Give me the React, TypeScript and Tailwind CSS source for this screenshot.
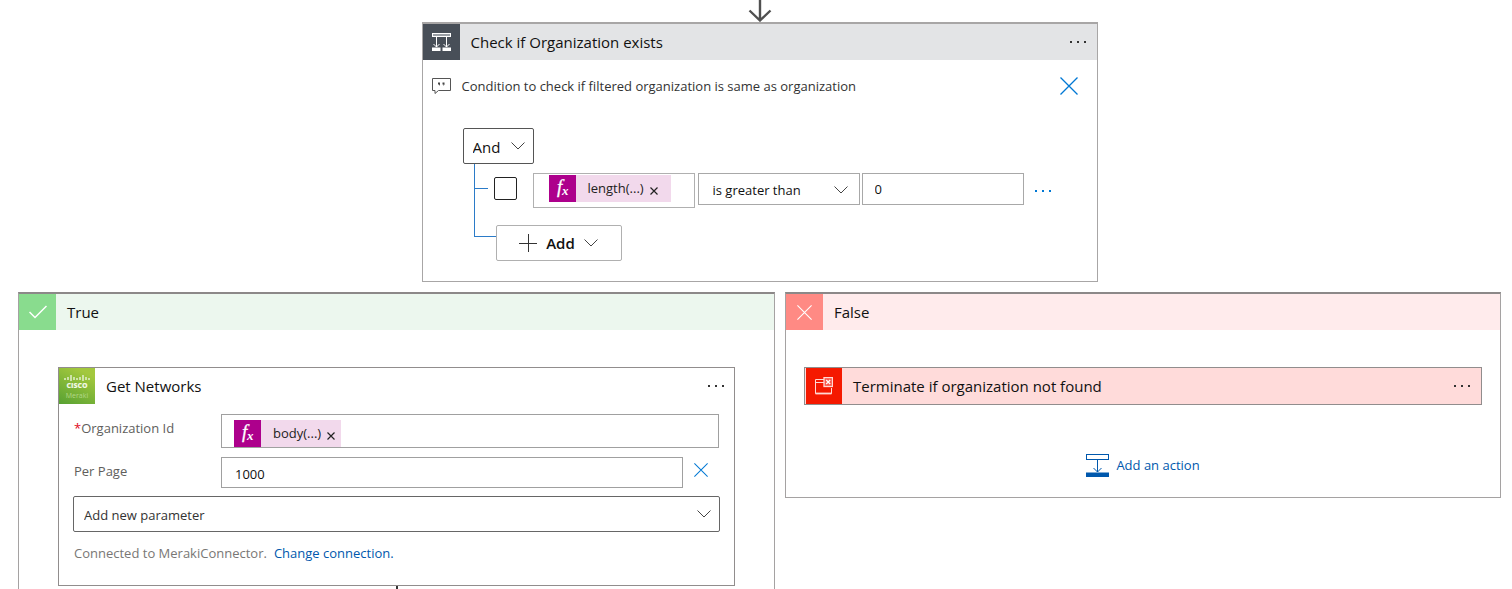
import type { ReactNode } from "react";

function Ellipsis({ label, tone = "text-[#333]" }: { label: string; tone?: string }) {
  return (
    <button type="button" aria-label={label} className={`shrink-0 ${tone}`}>
      <svg width="18" height="4" viewBox="0 0 18 4" fill="currentColor">
        <rect x="1" y="1" width="2" height="2" />
        <rect x="8" y="1" width="2" height="2" />
        <rect x="15" y="1" width="2" height="2" />
      </svg>
    </button>
  );
}

function Cross({ className }: { className: string }) {
  return (
    <svg viewBox="0 0 18 18" className={className} fill="none" stroke="currentColor" strokeWidth="1.3">
      <path d="M.5.5l17 17M17.5.5l-17 17" />
    </svg>
  );
}

function Chevron() {
  return (
    <svg width="14" height="8" viewBox="0 0 14 8" fill="none" stroke="#444" className="shrink-0">
      <path d="M.5.5L7 7 13.5.5" />
    </svg>
  );
}

function ConditionIcon() {
  return (
    <svg width="20" height="20" viewBox="0 0 20 20" fill="none" stroke="#fff">
      <rect x="1.5" y="1.5" width="18" height="3" fill="#9a9fa5" />
      <path d="M5.5 5v10M15.5 5v10M2.5 12l3 3 3-3M12.5 12l3 3 3-3" />
      <path d="M1 15.5h8.500v3.500H1zM11.500 15.500H20V19h-8.500z" fill="#fff" stroke="none" />
    </svg>
  );
}

function Token({ text, className }: { text: string; className: string }) {
  return (
    <span className={`flex h-[27px] shrink-0 items-center bg-[#f2d9ec] text-[13px] text-[#222] ${className}`}>
      <svg width="27" height="27" viewBox="0 0 27 27" className="mr-3">
        <rect width="27" height="27" fill="#ad008c" />
        <text x="8" y="18" fill="#fff" stroke="#fff" strokeWidth=".3" fontFamily="Liberation Serif, serif" fontStyle="italic" fontSize="19">f</text>
        <text x="13" y="20" fill="#fff" fontFamily="Liberation Serif, serif" fontStyle="italic" fontWeight="700" fontSize="13">x</text>
      </svg>
      <span className="pt-px">{text}</span>
      <button type="button" aria-label={`Remove ${text}`} className="mt-1 ml-[6px]">
        <svg width="8" height="8" viewBox="0 0 8 8" stroke="#222" strokeWidth="1.2">
          <path d="M.5.5l7 7M7.5.5l-7 7" />
        </svg>
      </button>
    </span>
  );
}

function Picker({ label, value, className, inset, arrow }: { label: string; value: string; className: string; inset: string; arrow: string }) {
  return (
    <div className={`grid items-center border bg-white ${className}`}>
      <select aria-label={label} className={`col-start-1 row-start-1 h-full w-full appearance-none bg-transparent pt-[3px] ${inset}`}>
        <option>{value}</option>
      </select>
      <span className={`pointer-events-none col-start-1 row-start-1 justify-self-end ${arrow}`}>
        <Chevron />
      </span>
    </div>
  );
}

function Branch({ title, tile, band, icon, children }: { title: string; tile: string; band: string; icon: ReactNode; children: ReactNode }) {
  return (
    <section className="border border-t-2 border-[#a5a2a2] border-t-[#8c8888]">
      <header className={`flex h-9 items-center ${band}`}>
        <span className={`flex h-9 w-[37px] items-center justify-center ${tile}`}>{icon}</span>
        <h2 className="pl-[11px] text-[15px]">{title}</h2>
      </header>
      {children}
    </section>
  );
}

function Condition() {
  return (
    <section className="mx-auto w-full max-w-[676px] border border-t-2 border-[#a8a6a6] pb-5">
      <header className="flex h-9 items-center bg-[#e3e4e6] pr-[10px]">
        <span className="flex h-full w-[37px] items-center justify-center bg-[#484f58]">
          <ConditionIcon />
        </span>
        <h2 className="flex-1 pt-px pl-[11px] text-[15px]">Check if Organization exists</h2>
        <Ellipsis label="Condition menu" />
      </header>
      <div className="flex h-[51px] items-center pr-[19px] pl-[9px]">
        <svg width="19" height="18" viewBox="0 0 19 18" fill="none" stroke="#555">
          <path d="M.5 1.5h18v12H6.5l-3.500 3v-3H.5z" />
          <path d="M6 5.5h2v2L7 9V7.5H6zM10.5 5.5h2v2l-1 1.500V7.5h-1z" fill="#444" stroke="none" />
        </svg>
        <p className="flex-1 pt-[2px] pl-[11px] text-[13px] text-[#333]">Condition to check if filtered organization is same as organization</p>
        <button type="button" aria-label="Remove comment" className="text-[#0078d4]">
          <Cross className="h-[18px] w-[18px]" />
        </button>
      </div>
      <div className="pt-[17px] pl-10">
        <Picker label="Group operator" value="And" className="h-9 w-[71px] rounded-[2px] border-[#555] text-[15px]" inset="pl-[9px]" arrow="pr-2" />
        <div className="flex pl-[11px]">
          <div className="w-5 shrink-0">
            <div className="h-[25px] w-[14px] border-b border-l border-[#2b7bc8]" />
            <div className="h-12 w-[22px] border-b border-l border-[#2b7bc8]" />
          </div>
          <div className="pt-[9px]">
            <div className="flex h-[52px] items-start">
              <input type="checkbox" aria-label="Select condition row" className="mt-1 mr-4 h-[23px] w-[23px] shrink-0 appearance-none rounded-[2px] border border-[#222]" />
              <div className="mr-[3px] flex h-[35px] w-[162px] items-start border border-[#b0b0b0] pt-px pl-[15px]">
                <Token text="length(...)" className="pr-[13px]" />
                <input aria-label="Left value" className="h-[27px] w-full min-w-0 outline-none" />
              </div>
              <Picker label="Comparison" value="is greater than" className="mr-[2px] h-8 w-[162px] border-[#a8a8a8] text-[13px]" inset="pl-[14px]" arrow="pt-[2px] pr-[11px]" />
              <input aria-label="Right value" defaultValue="0" className="h-8 w-[162px] border border-[#a8a8a8] pl-3 text-[13px]" />
              <span className="flex h-9 items-center pl-[10px]">
                <Ellipsis label="Row menu" tone="text-[#0078d4]" />
              </span>
            </div>
            <button type="button" className="ml-[2px] flex h-9 w-[126px] items-center justify-center rounded-[2px] border border-[#b0b0b0] text-[15px] font-semibold">
              <svg width="18" height="18" viewBox="0 0 18 18" stroke="#333" className="mr-[9px]">
                <path d="M0 9.5h18M9.5 0v18" />
              </svg>
              <span className="mr-[9px]">Add</span>
              <Chevron />
            </button>
          </div>
        </div>
      </div>
    </section>
  );
}

function MerakiLogo() {
  return (
    <svg width="36" height="36" viewBox="0 0 36 36" className="shrink-0">
      <defs>
        <linearGradient id="meraki" x1="0" y1="1" x2="0.5" y2="0">
          <stop offset="0" stopColor="#57a132" />
          <stop offset="1" stopColor="#a3c83d" />
        </linearGradient>
      </defs>
      <rect width="36" height="36" fill="url(#meraki)" />
      <path d="M6 10v2M9 9v3M12 7v6M15 9v3M18 10v2M21 9v3M24 7v6M27 9v3M30 10v2" stroke="#e4f0cc" strokeWidth="1.5" />
      <text x="18" y="20" textAnchor="middle" fill="#f2f8e4" fontFamily="Open Sans, sans-serif" fontWeight="800" fontSize="7">CISCO</text>
      <text x="18" y="30" textAnchor="middle" fill="#b4d787" fontFamily="Open Sans, sans-serif" fontSize="7">Meraki</text>
    </svg>
  );
}

function GetNetworks() {
  return (
    <section className="border border-[#918d8d] pb-[22px]">
      <header className="flex h-9 items-center pr-[9px]">
        <MerakiLogo />
        <h3 className="flex-1 pl-[11px] text-[15px]">Get Networks</h3>
        <Ellipsis label="Get Networks menu" />
      </header>
      <div className="px-[14px] text-[13px]">
        <div className="mt-[10px] flex">
          <label htmlFor="org" className="w-[148px] shrink-0 pt-[5px] pl-px text-[#605e5c]">
            <span className="text-[#e00b1c]">*</span>Organization Id
          </label>
          <div className="mr-px flex h-[34px] flex-1 items-end border border-[#a0a0a0] pl-3">
            <Token text="body(...)" className="pr-[6px]" />
            <input id="org" className="h-[27px] w-full min-w-0 outline-none" />
          </div>
        </div>
        <div className="mt-[9px] flex">
          <label htmlFor="per-page" className="w-[148px] shrink-0 pt-[5px] pl-px text-[#605e5c]">Per Page</label>
          <input id="per-page" defaultValue="1000" className="h-[31px] min-w-0 flex-1 border border-[#a0a0a0] pt-[2px] pl-[13px]" />
          <button type="button" aria-label="Remove Per Page" className="mr-3 ml-[11px] h-[26px] text-[#0078d4]">
            <Cross className="h-[14px] w-[14px]" />
          </button>
        </div>
        <Picker label="Add new parameter" value="Add new parameter" className="mt-2 h-9 rounded-[2px] border-[#666] text-[#333]" inset="pl-[10px]" arrow="pr-2" />
        <p className="mt-[11px] pl-px leading-5 text-[#797775]">
          Connected to MerakiConnector.
          <a href="#" className="pl-[7px] text-[#0058ad]">Change connection.</a>
        </p>
      </div>
    </section>
  );
}

export default function App() {
  return (
    <main className="pr-[11px] pl-[18px] font-['Open_Sans','Noto_Sans',sans-serif] text-[#111]">
      <svg width="24" height="22" viewBox="0 0 24 22" fill="none" stroke="#505050" strokeWidth="2.4" className="mx-auto block">
        <path d="M12 0v21M1.5 10.5L12 20.500l10.500-10" />
      </svg>
      <Condition />
      <div className="mt-[10px] grid grid-cols-[757fr_716fr] items-start gap-[10px]">
        <Branch
          title="True"
          tile="bg-[#89dc8e]"
          band="bg-[#ecf7ee]"
          icon={
            <svg width="18" height="14" viewBox="0 0 18 14" fill="none" stroke="#fff" strokeWidth="1.5">
              <path d="M.5 7L6 12.500 17.500 1" />
            </svg>
          }
        >
          <div className="px-[39px] pt-[37px]">
            <GetNetworks />
            <svg width="2" height="3" viewBox="0 0 2 3" className="mx-auto block">
              <path d="M1 0v3" stroke="#333" strokeWidth="2" />
            </svg>
          </div>
        </Branch>
        <Branch title="False" tile="bg-[#ff8a84] text-white" band="bg-[#ffebec]" icon={<Cross className="h-[15px] w-[15px]" />}>
          <div className="px-[18px] pt-[37px] pb-5">
            <section className="flex h-[38px] items-center border border-[#918d8d] bg-[#ffdbda] pr-[10px] pl-px">
              <span className="flex h-9 w-9 items-center justify-center bg-[#f51900]">
                <svg width="18" height="18" viewBox="0 0 18 18" fill="none" stroke="#ffd9d4">
                  <path d="M9 2.5H.5v14h16V11M.5 5.5H9" />
                  <path d="M.5 16.5h16" strokeWidth="1.8" />
                  <rect x="9" y=".5" width="8.500" height="9" fill="#f8574a" strokeWidth="1.3" />
                  <path d="M11.2 3l4 4M15.2 3l-4 4" stroke="#fff" strokeWidth="1.3" />
                </svg>
              </span>
              <h3 className="flex-1 pl-[11px] text-[15px]">Terminate if organization not found</h3>
              <Ellipsis label="Terminate menu" />
            </section>
            <button type="button" className="mx-auto mt-[49px] flex items-center gap-[7px] text-[13px] text-[#0058ad]">
              <svg width="23" height="23" viewBox="0 0 23 23" fill="none" stroke="#0058ad">
                <rect x=".5" y=".5" width="22" height="5" />
                <path d="M11.5 6v12M7.5 14l4 4 4-4" />
                <path d="M0 18.5h23V23H0z" fill="#0058ad" stroke="none" />
              </svg>
              Add an action
            </button>
          </div>
        </Branch>
      </div>
    </main>
  );
}
